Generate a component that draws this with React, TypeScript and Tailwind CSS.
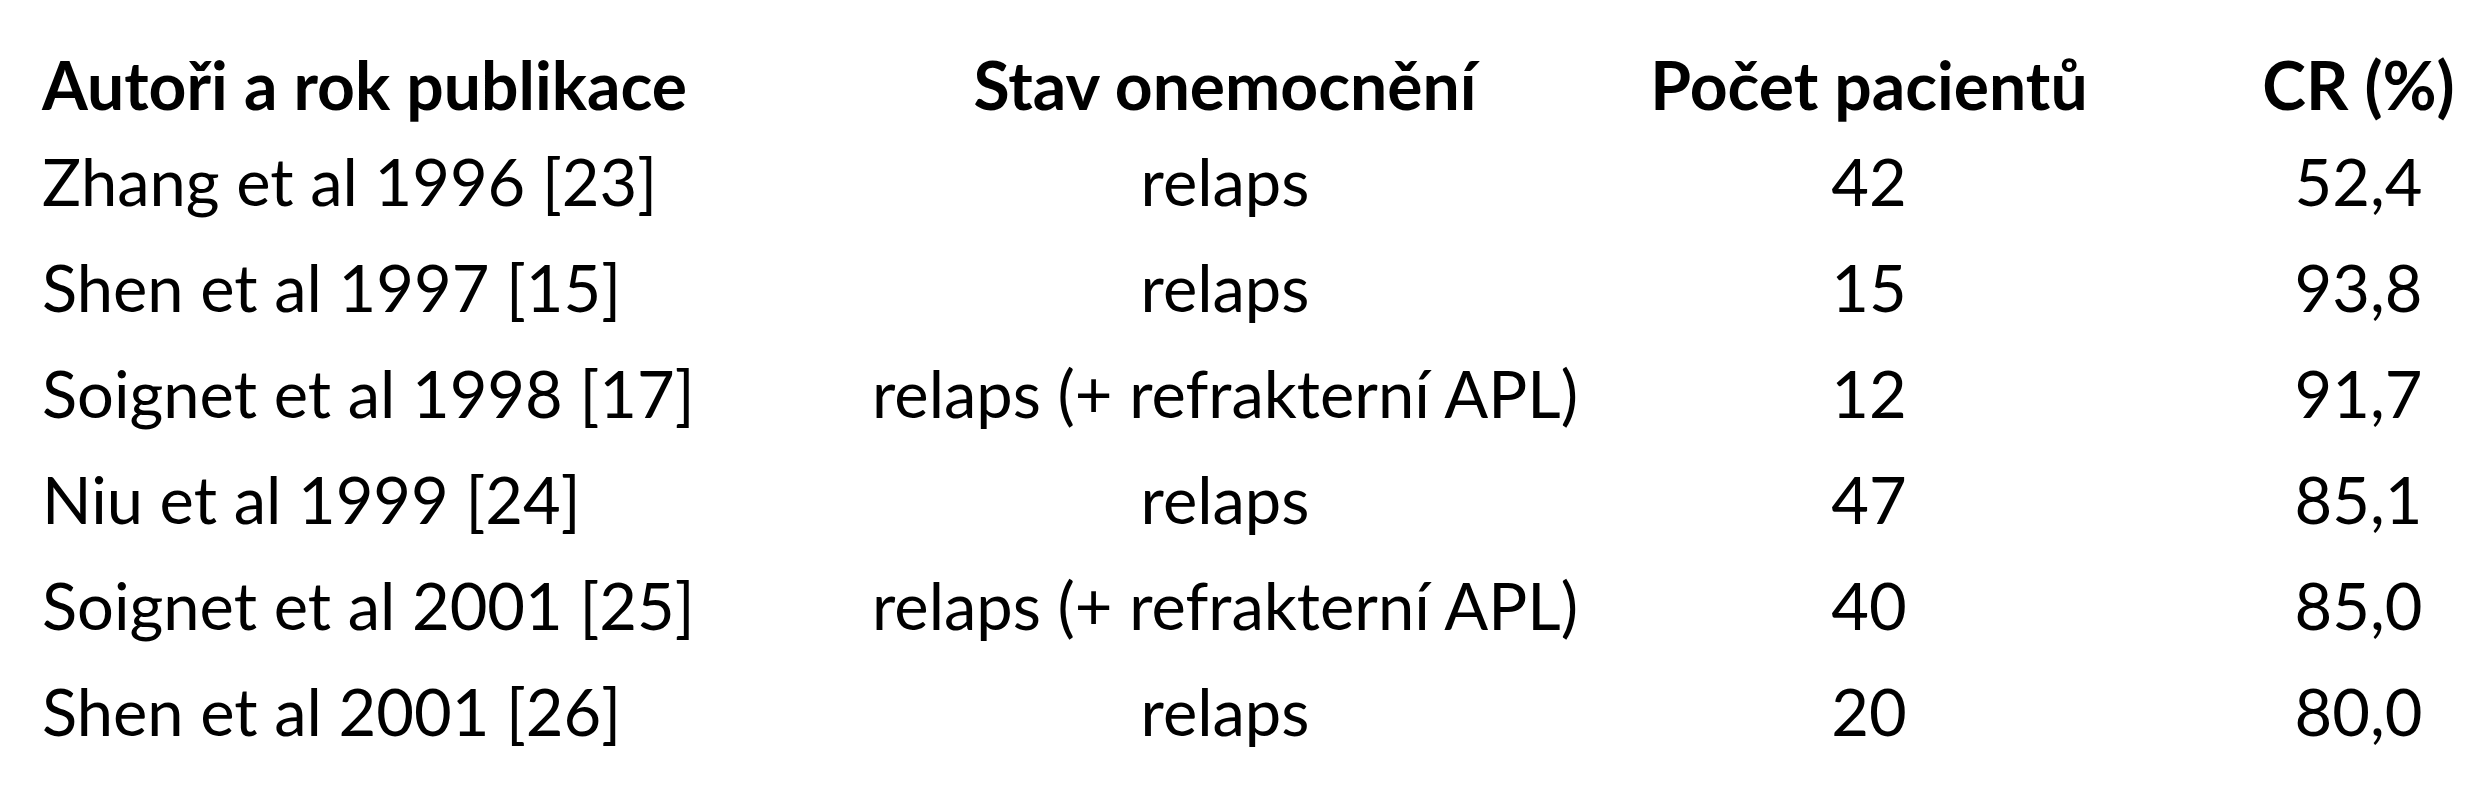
const rows = [
  ['Zhang et al 1996 [23]', 'relaps', '42', '52,4'],
  ['Shen et al 1997 [15]', 'relaps', '15', '93,8'],
  ['Soignet et al 1998 [17]', 'relaps (+ refrakterní APL)', '12', '91,7'],
  ['Niu et al 1999 [24]', 'relaps', '47', '85,1'],
  ['Soignet et al 2001 [25]', 'relaps (+ refrakterní APL)', '40', '85,0'],
  ['Shen et al 2001 [26]', 'relaps', '20', '80,0'],
];

const head = 'text-[66px] leading-[87px] font-bold whitespace-nowrap';
const cell = 'text-[65px] leading-[106px] font-normal whitespace-nowrap';

export default function App() {
  return (
    <div className='min-h-[800px] bg-white pl-[42px] pt-[41px] font-["Lato",sans-serif] text-black'>
      <div className="grid grid-cols-[783px_800px_488px_377px]">
        <div className={head}>Autoři a rok publikace</div>
        <div className={head + ' text-center'}>Stav onemocnění</div>
        <div className={head + ' text-center'}>Počet pacientů</div>
        <div className={head + ' text-center pl-[114px]'}>CR (%)</div>
        {rows.map((r) => (
          <div key={r[0]} className="contents">
            <div className={cell}>{r[0]}</div>
            <div className={cell + ' text-center'}>{r[1]}</div>
            <div className={cell + ' text-center'}>{r[2]}</div>
            <div className={cell + ' text-center pl-[114px]'}>{r[3]}</div>
          </div>
        ))}
      </div>
    </div>
  );
}
